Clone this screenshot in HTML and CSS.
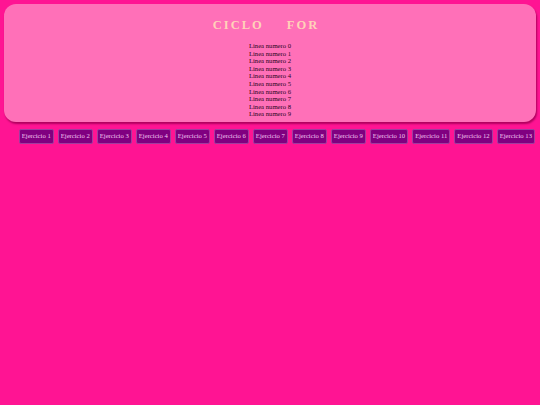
FILE: index.html
```html
<!DOCTYPE html>
<html lang="es">
<head>
<meta charset="utf-8">
<title>Ciclo For</title>
<link rel="stylesheet" href="styles.css">
</head>
<body>
<div class="card">
  <h1 class="title">CICLO FOR</h1>
  <div class="lines">
    <div>Linea numero 0</div>
    <div>Linea numero 1</div>
    <div>Linea numero 2</div>
    <div>Linea numero 3</div>
    <div>Linea numero 4</div>
    <div>Linea numero 5</div>
    <div>Linea numero 6</div>
    <div>Linea numero 7</div>
    <div>Linea numero 8</div>
    <div>Linea numero 9</div>
  </div>
</div>
<nav class="nav">
  <button class="btn">Ejercicio 1</button>
  <button class="btn">Ejercicio 2</button>
  <button class="btn">Ejercicio 3</button>
  <button class="btn">Ejercicio 4</button>
  <button class="btn">Ejercicio 5</button>
  <button class="btn">Ejercicio 6</button>
  <button class="btn">Ejercicio 7</button>
  <button class="btn">Ejercicio 8</button>
  <button class="btn">Ejercicio 9</button>
  <button class="btn">Ejercicio 10</button>
  <button class="btn">Ejercicio 11</button>
  <button class="btn">Ejercicio 12</button>
  <button class="btn">Ejercicio 13</button>
</nav>
</body>
</html>
```
FILE: styles.css
```css
html, body {
  margin: 0;
  padding: 0;
}
body {
  background: #ff1493;
  font-family: "Liberation Serif", serif;
  padding: 4px;
}
.card {
  background: #ff70b8;
  border-radius: 12px;
  box-shadow: 1px 2px 2px #b0005e;
  padding: 14px 0 4px;
  text-align: center;
}
.title {
  margin: 0 0 9px;
  padding-right: 8px;
  font-size: 12.5px;
  font-weight: bold;
  color: #ffd2b8;
  letter-spacing: 2px;
  word-spacing: 18px;
  line-height: 15px;
}
.lines {
  font-size: 6.67px;
  line-height: 7.6px;
  color: #2a0420;
}
.nav {
  display: flex;
  justify-content: flex-end;
  gap: 4px;
  margin-top: 7px;
  padding-right: 1px;
}
.btn {
  flex: none;
  white-space: nowrap;
  font-family: "Liberation Serif", serif;
  font-size: 6.67px;
  line-height: 8px;
  padding: 2.5px 2px;
  margin: 0;
  background: #800080;
  color: #f4c8f0;
  border: 1px solid #a03ca0;
  border-radius: 2px;
}
```
